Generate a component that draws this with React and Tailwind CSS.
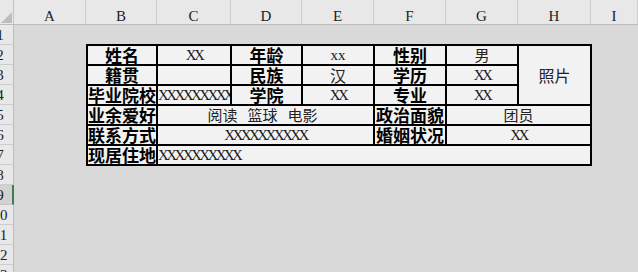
import React from 'react';

const columns = [
  { name: 'A', w: 'w-[72px]' },
  { name: 'B', w: 'w-[71px]' },
  { name: 'C', w: 'w-[74px]' },
  { name: 'D', w: 'w-[71px]' },
  { name: 'E', w: 'w-[72px]' },
  { name: 'F', w: 'w-[72px]' },
  { name: 'G', w: 'w-[72px]' },
  { name: 'H', w: 'w-[73px]' },
  { name: 'I', w: 'flex-1' },
];

const rows = [1, 2, 3, 4, 5, 6, 7, 8, 9, 10, 11, 12, 13];

const cell = 'border-r-2 border-b-2 border-black flex items-center justify-center bg-[#f2f2f2] overflow-hidden whitespace-nowrap';
const label = `${cell} font-['Noto_Sans_CJK_SC',sans-serif] font-bold text-[17px] leading-[18px] text-black`;
const text = `${cell} font-['Noto_Sans_CJK_SC',sans-serif] text-[15px] leading-[18px] text-[#222]`;
const latin = `${cell} font-['Liberation_Serif',serif] text-[15px] leading-[18px] tracking-[-2.6px] text-[#1a1a1a]`;

function InfoTable() {
  return (
    <div className="grid grid-cols-[70px_74px_71px_72px_72px_72px_73px] grid-rows-[20px_20px_20px_20px_20px_20px] border-l-2 border-t-2 border-black w-[506px]">
      {/* row 2 */}
      <div className={label}>姓名</div>
      <div className={latin}>XX</div>
      <div className={label}>年龄</div>
      <div className={`${latin} tracking-[0px]`}>xx</div>
      <div className={label}>性别</div>
      <div className={text}>男</div>
      <div className={`${text} row-span-3 text-[16px]`}>照片</div>

      {/* row 3 */}
      <div className={label}>籍贯</div>
      <div className={cell}></div>
      <div className={label}>民族</div>
      <div className={`${text} text-[16px]`}>汉</div>
      <div className={label}>学历</div>
      <div className={latin}>XX</div>

      {/* row 4 */}
      <div className={label}>毕业院校</div>
      <div className={`${latin} justify-start`}>XXXXXXXXX</div>
      <div className={label}>学院</div>
      <div className={latin}>XX</div>
      <div className={label}>专业</div>
      <div className={latin}>XX</div>

      {/* row 5 */}
      <div className={label}>业余爱好</div>
      <div className={`${text} col-span-3 gap-[10px] pr-[6px]`}>
        <span>阅读</span>
        <span>篮球</span>
        <span>电影</span>
      </div>
      <div className={label}>政治面貌</div>
      <div className={`${text} col-span-2`}>团员</div>

      {/* row 6 */}
      <div className={label}>联系方式</div>
      <div className={`${latin} col-span-3`}>XXXXXXXXXX</div>
      <div className={label}>婚姻状况</div>
      <div className={`${latin} col-span-2`}>XX</div>

      {/* row 7 */}
      <div className={label}>现居住地</div>
      <div className={`${latin} col-span-6 justify-start`}>XXXXXXXXXX</div>
    </div>
  );
}

export default function App() {
  return (
    <div className="w-[638px] h-[272px] overflow-hidden bg-[#d9d9d9] flex flex-col font-['Liberation_Serif',serif] text-[#222]">
      {/* column headers */}
      <div className="flex h-[25px] shrink-0 bg-[#e8e8e8] border-b border-[#bcbcbc]">
        <div className="w-[14px] shrink-0 border-r border-[#c4c4c4] flex items-end">
          <svg width="13" height="22" viewBox="0 0 13 22">
            <polygon points="12,10 12,21 1,21" fill="#bdbdbd" />
          </svg>
        </div>
        {columns.map((c) => (
          <div
            key={c.name}
            className={`${c.w} shrink-0 border-r border-[#cdcdcd] flex items-center justify-center pt-[9px] text-[15px] leading-none`}
          >
            {c.name}
          </div>
        ))}
      </div>

      <div className="flex flex-1 min-h-0">
        {/* row numbers */}
        <div className="w-[14px] shrink-0 flex flex-col overflow-hidden">
          {rows.map((r) => (
            <div
              key={r}
              className={
                r === 9
                  ? 'h-[20px] shrink-0 bg-[#d2d2d2] border-b border-[#c4c4c4] border-r-2 border-r-[#3e7d58] overflow-hidden'
                  : 'h-[20px] shrink-0 bg-[#e8e8e8] border-b border-[#cdcdcd] border-r border-r-[#bcbcbc] overflow-hidden'
              }
            >
              <div className="-ml-[14px] w-[28px] text-center text-[15px] leading-[20px]">{r}</div>
            </div>
          ))}
        </div>

        {/* sheet area */}
        <div className="flex-1 pl-[72px] pt-[19px]">
          <InfoTable />
        </div>
      </div>
    </div>
  );
}
